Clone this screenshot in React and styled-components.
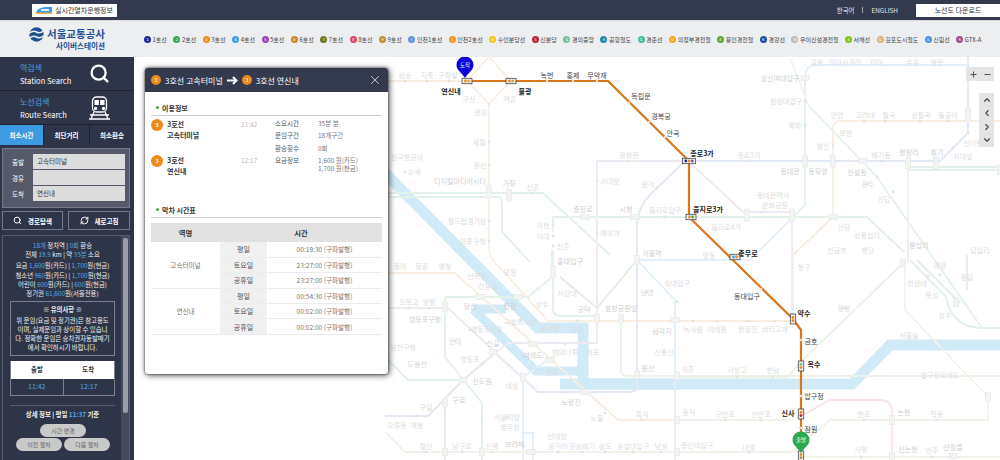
import React from 'react'
import styled, { createGlobalStyle } from 'styled-components'
import { ChevronUp, ChevronDown, ChevronLeft, ChevronRight, Plus, Minus, Search, RefreshCw, X } from 'lucide-react'

const FONT = '"Noto Sans CJK KR", "Noto Sans", sans-serif'

const LINES = [
  ['1호선', '#1c2f8f', '1'], ['2호선', '#3aa655', '2'], ['3호선', '#ef8a1d', '3'], ['4호선', '#3c9fdc', '4'],
  ['5호선', '#9a45b0', '5'], ['6호선', '#cf8a1f', '6'], ['7호선', '#6b7a26', '7'], ['8호선', '#e0436f', '8'],
  ['9호선', '#bd9030', '9'], ['인천1호선', '#5f93dd', 'I'], ['인천2호선', '#f09a25', 'I'], ['수인분당선', '#f0c419', 'B'],
  ['신분당', '#c0203a', 'S'], ['경의중앙', '#6fc09a', 'G'], ['공항철도', '#2585a8', 'A'], ['경춘선', '#3ebf9e', 'G'],
  ['의정부경전철', '#f2a71f', 'U'], ['용인경전철', '#55a83a', 'E'], ['경강선', '#1a4fa5', 'K'], ['우이신설경전철', '#b9b9b9', 'W'],
  ['서해선', '#7cc418', 'S'], ['김포도시철도', '#dcb670', 'G'], ['신림선', '#4b93e6', 'S'], ['GTX-A', '#a0508f', 'A'],
]

const PALE = [
  ['#f9eee0', 'M489 57 L511 81 L489 104 L467 81 L489 57 M489 104 V248 Q489 256 494 261 L548 321 H793 V255 L833 217 V128 Q833 121 840 121 H1000'],
  ['#f8eee0', 'M385 81 H467 M385 273 H455 L618 420 H680 M608 81 H620'],
  ['#e2f2e7', 'M553 250 V308 Q553 316 561 316 H595 M553 232 V217 H867 L904 252 M445 297 H528 L552 277 V250 M445 297 V357 L482 403 V460 M385 357 L408 380 H463'],
  ['#e2f2ea', 'M385 193 H543 L610 255 M385 197 H497 Q502 197 502 202 V232 L530 262 M808 105 L877 177 L982 328 H1000 M910 260 L946 297 Q952 328 982 328 M908 167 H1000 M908 170 H1000'],
  ['#e3e8f5', 'M688 161 H940 L968 133 V57 M685 161 L657 188 Q637 205 637 225 V385 Q637 392 630 392 H538 L495 353 L463 380 L428 416 H385 M445 400 V460'],
  ['#e2f0f9', 'M968 65 H817 Q805 65 805 78 V205 L750 260 H637 L675 300 V460 M523 460 V377 L555 355 M533 460 V433 H523'],
  ['#f0e9f4', 'M597 161 H688 M597 161 V343 H508 L495 353 M385 308 H448 L538 392 M688 161 L743 212 H792 V319'],
  ['#f3f2ea', 'M808 105 Q805 95 790 58 M905 262 V310 L988 397 V420 L963 420 H830 L793 452 H680 M763 420 H680 L793 420 M800 457 H1000 M385 432 L405 452 H800'],
  ['#ebf2e6', 'M903 263 L803 360 L787 377 H680 M908 170 V262 M621 316 V370 Q621 376 627 376 H1000'],
  ['#f9e5e8', 'M803 415 L830 400 H880 Q892 400 892 412 V460'],
  ['#e2eee3', 'M967 255 V290 M560 277 L597 308 L637 260 M917 260 L960 303'],
]

const PALE_LABELS = [
  ['삼송', 405, 75], ['지축', 427, 75], ['구파발', 448, 75], ['구산', 469, 99], ['역촌', 510, 99], ['응암', 481, 112],
  ['새절', 479, 142], ['증산', 480, 165], ['디지털미디어시티', 460, 181, 1], ['가좌', 509, 183, 1], ['신촌', 533, 187],
  ['월드컵경기장', 467, 221], ['마포구청', 473, 241], ['한국항공대', 407, 157], ['수색', 414, 172], ['아현', 543, 225],
  ['이대', 543, 236], ['신촌', 563, 246], ['충정로', 583, 209, 1], ['시청', 626, 209, 1], ['을지로입구', 665, 210],
  ['서대문', 610, 181], ['광화문', 629, 155], ['종각', 648, 184], ['애오개', 610, 233], ['서울역', 652, 253, 1],
  ['성신여대입구', 780, 78, 1], ['한성대입구', 786, 101], ['혜화', 795, 125], ['종로5가', 749, 155], ['동대문', 790, 171, 1],
  ['동묘앞', 818, 171, 1], ['창신', 823, 146], ['안암', 837, 115], ['보문', 846, 133], ['고려대', 865, 115], ['월곡', 889, 115],
  ['상월곡', 921, 115], ['돌곶이', 948, 115], ['제기동', 881, 155], ['청량리', 909, 152, 1], ['회기', 937, 152, 1],
  ['외대앞', 963, 156], ['신이문', 973, 143], ['신설동', 857, 172, 1], ['용두', 868, 184], ['신답', 884, 199],
  ['동대문역사', 773, 195], ['문화공원', 775, 205], ['을지로4가', 726, 227], ['신당', 844, 227], ['상왕십리', 867, 235],
  ['왕십리', 919, 245, 1], ['신금호', 837, 250], ['행당', 868, 250], ['답십리', 980, 250], ['길음', 817, 62], ['미아사거리', 845, 62],
  ['미아', 877, 62], ['수유', 913, 62], ['쌍문', 937, 62], ['명동', 709, 255], ['청구', 804, 267], ['응봉', 844, 308],
  ['한양대', 917, 283], ['뚝섬', 932, 295], ['마장', 940, 265], ['용답', 967, 277], ['성수', 945, 315], ['서울숲', 909, 335],
  ['압구정로데오', 940, 375], ['녹사평', 693, 329], ['이태원', 717, 329], ['한강진', 748, 329], ['버티고개', 775, 329],
  ['이촌', 688, 369], ['서빙고', 737, 370], ['한남', 773, 370], ['동작', 689, 412], ['구반포', 725, 414], ['신반포', 761, 414],
  ['반포', 864, 414], ['논현', 904, 412, 1], ['학동', 937, 414], ['사평', 861, 449], ['신논현', 908, 449, 1], ['언주', 932, 450],
  ['선정릉', 953, 447, 1], ['총신대입구', 697, 445], ['내방', 749, 447], ['합정', 510, 306, 1], ['당산', 470, 306, 1],
  ['망원', 510, 272], ['홍대입구', 570, 261, 1], ['서강대', 567, 293], ['상수', 542, 304], ['광흥창', 550, 328], ['대흥', 577, 329],
  ['공덕', 584, 309, 1], ['효창공원앞', 621, 308, 1], ['삼각지', 662, 331, 1], ['숙대입구', 677, 283], ['남영', 647, 292],
  ['신용산', 664, 352], ['용산', 648, 368, 1], ['여의도', 533, 355, 1], ['여의나루', 565, 352], ['마포', 593, 352],
  ['국회의사당', 520, 322], ['선유도', 488, 286], ['양평', 429, 302], ['오목교', 409, 302], ['영등포구청', 425, 319, 1],
  ['영등포시장', 487, 329], ['문래', 455, 341], ['신길', 493, 343, 1], ['영등포', 470, 359], ['신도림', 482, 381, 1],
  ['구로', 459, 400, 1], ['도림천', 417, 364], ['대방', 512, 386], ['샛강', 552, 372], ['노량진', 571, 402, 1], ['노들', 597, 418],
  ['흑석', 642, 414], ['구일', 426, 407], ['오류동', 397, 425], ['개봉', 417, 425], ['서울지방', 507, 417], ['병무청', 510, 427],
  ['신대방', 557, 436], ['삼거리', 558, 446], ['장승배기', 582, 446], ['상도', 605, 446], ['숭실대입구', 633, 446], ['남성', 661, 446],
  ['철산', 426, 446], ['남구로', 462, 446], ['신풍', 492, 446], ['보라매', 515, 444, 1], ['양천구청', 403, 347], ['증미', 400, 266],
  ['등촌', 422, 266], ['염창', 445, 266], ['신목동', 477, 276],
]

const PALE_DOTS = [
  [405, 81], [427, 81], [449, 81], [489, 104], [489, 142], [489, 165], [489, 221], [489, 241], [405, 172], [533, 193],
  [553, 225], [553, 236], [553, 246], [597, 181], [597, 233], [629, 161], [657, 188], [665, 217], [749, 161], [805, 125],
  [805, 101], [833, 146], [881, 161], [858, 161], [877, 177], [893, 192], [885, 121], [864, 121], [920, 121], [948, 121],
  [968, 133], [953, 148], [844, 308], [693, 321], [717, 321], [748, 321], [775, 321], [737, 377], [773, 377], [725, 420],
  [761, 420], [864, 420], [937, 420], [861, 457], [932, 457], [749, 452], [928, 276], [940, 275], [520, 320], [577, 321],
  [565, 344], [470, 330], [455, 341], [482, 364], [429, 308], [409, 308], [418, 364], [426, 416], [417, 416], [507, 417],
  [426, 452], [462, 452], [492, 452], [558, 452], [582, 452], [605, 452], [633, 452], [661, 452], [647, 292], [677, 302],
  [642, 420], [605, 413], [664, 352], [868, 184],
]

const PALE_MARKS = [
  [489, 192, 5, 13], [509, 195, 5, 12], [585, 217, 9, 5], [635, 217, 9, 5], [691, 217, 7, 5], [805, 78, 8, 5], [805, 161, 5, 12],
  [833, 161, 5, 12], [863, 161, 9, 5], [908, 163, 5, 12], [936, 163, 5, 12], [968, 115, 5, 14], [747, 215, 5, 12], [792, 215, 5, 12],
  [833, 217, 9, 5], [1000, 170, 5, 9], [903, 263, 5, 8], [956, 302, 5, 9], [988, 397, 5, 9], [892, 420, 5, 9], [892, 457, 5, 9],
  [953, 456, 8, 5], [553, 272, 5, 12], [597, 318, 5, 8], [621, 318, 5, 8], [637, 375, 5, 8], [677, 376, 5, 8], [445, 307, 5, 9],
  [463, 380, 8, 5], [493, 352, 8, 5], [523, 377, 5, 8], [445, 403, 5, 8], [445, 452, 5, 8], [482, 452, 5, 8], [531, 452, 9, 5],
  [677, 452, 5, 8], [677, 420, 5, 8], [585, 392, 9, 5], [480, 297, 9, 5], [518, 297, 9, 5], [533, 344, 9, 5], [550, 360, 9, 5],
  [637, 260, 5, 9], [675, 320, 9, 5],
]

const ACTIVE_LABELS = [
  ['연신내', 451, 91, 1], ['불광', 525, 91, 1], ['녹번', 547, 75], ['홍제', 573, 75], ['무악재', 597, 75], ['독립문', 641, 96],
  ['경복궁', 661, 116], ['안국', 673, 133], ['종로3가', 702, 153, 1], ['을지로3가', 708, 209, 1], ['충무로', 748, 253, 1],
  ['동대입구', 747, 296], ['약수', 804, 313, 1], ['금호', 811, 341], ['옥수', 814, 364, 1], ['압구정', 814, 396], ['신사', 788, 413, 1],
  ['잠원', 811, 429],
]

const ACTIVE_DOTS = [[547, 81], [573, 81], [597, 81], [629, 103], [649, 122], [665, 137], [761, 289], [801, 340], [801, 396], [801, 428]]

const TRANSFERS = [
  { x: 467, y: 81, colors: ['#ef8a1d', '#d9a44a'] },
  { x: 511, y: 81, colors: ['#ef8a1d', '#d9a44a'] },
  { x: 689, y: 161, colors: ['#1c2f8f', '#ef8a1d', '#9a45b0'], wide: true },
  { x: 691, y: 217, colors: ['#ef8a1d', '#3aa655'] },
  { x: 735, y: 257, colors: ['#3c9fdc', '#ef8a1d'] },
  { x: 793, y: 319, colors: ['#ef8a1d', '#cf8a1f'], vertical: true },
  { x: 801, y: 366, colors: ['#6fc09a', '#ef8a1d'], vertical: true },
  { x: 801, y: 414, colors: ['#ef8a1d', '#c0203a'], vertical: true },
  { x: 801, y: 456, colors: ['#ef8a1d', '#bd9030'], vertical: true },
]

const TIMETABLE = [
  ['고속터미널', [['평일', '00:19:30 (구파발행)'], ['토요일', '23:27:00 (구파발행)'], ['공휴일', '23:27:00 (구파발행)']]],
  ['연신내', [['평일', '00:54:30 (구파발행)'], ['토요일', '00:02:00 (구파발행)'], ['공휴일', '00:02:00 (구파발행)']]],
]

const Global = createGlobalStyle`
  html, body { margin: 0; padding: 0; background: #fff; overflow: hidden; }
  body { font-family: ${FONT}; }
  * { box-sizing: border-box; }
`

const Page = styled.div`
  width: 1000px;
  height: 460px;
  display: flex;
  flex-direction: column;
  overflow: hidden;
`

const TopBar = styled.header`
  height: 20px;
  flex: none;
  background: #343a4e;
  display: flex;
  align-items: center;
  padding: 0 0 0 32px;
`

const WhiteButton = styled.div`
  height: 13px;
  background: #fff;
  color: #333;
  font-size: 7px;
  display: flex;
  align-items: center;
  justify-content: center;
  gap: 3px;
  width: ${p => p.$width}px;
`

const TopLinks = styled.nav`
  margin-left: auto;
  display: flex;
  align-items: center;
  color: #e6e7ea;
  font-size: 6.4px;
  margin-right: 18px;
  gap: 8px;
`

const Sep = styled.span`
  width: 1px;
  height: 6px;
  background: #9fa3ae;
`

const LegendBar = styled.div`
  height: 37px;
  flex: none;
  background: #eceef0;
  border-top: 1px solid #d8dade;
  position: relative;
`

const LegendRow = styled.div`
  display: flex;
  align-items: center;
  height: 100%;
`

const LogoBox = styled.div`
  width: 144px;
  flex: none;
  display: flex;
  padding-left: 29px;
  gap: 3px;
  margin-top: -2px;
`

const LogoText = styled.div`
  display: flex;
  flex-direction: column;
  align-items: flex-end;
  color: #1d4f91;
  font-weight: 700;
  font-size: 10.5px;
  line-height: 13px;
  small {
    font-size: 7.6px;
    line-height: 9px;
    margin-top: 1px;
  }
`

const Legend = styled.ul`
  list-style: none;
  display: flex;
  gap: 6.5px;
  margin: 0;
  padding: 0;
`

const LegendItem = styled.li`
  display: flex;
  align-items: center;
  gap: 1.5px;
  font-size: 6px;
  color: #444;
  white-space: nowrap;
`

const LineBadge = styled.span`
  width: 7px;
  height: 7px;
  border-radius: 50%;
  background: ${p => p.$color};
  color: #fff;
  font-size: 4px;
  line-height: 7px;
  text-align: center;
`

const Body = styled.div`
  flex: 1;
  display: flex;
  min-height: 0;
`

const Sidebar = styled.aside`
  width: 134px;
  flex: none;
  background: #2f3548;
  display: flex;
  flex-direction: column;
`

const SearchLink = styled.div`
  height: ${p => p.$h}px;
  flex: none;
  padding: 0 24px 0 20px;
  display: flex;
  align-items: center;
  justify-content: space-between;
  border-bottom: 1px solid #1e2231;
`

const SearchText = styled.div`
  color: #fff;
  font-size: 7.6px;
  line-height: 13px;
  b {
    display: block;
    color: #4a9fde;
    font-weight: 400;
    font-size: 8px;
  }
`

const Tabs = styled.div`
  display: grid;
  grid-template-columns: 43px 46px 45px;
  height: 20px;
  flex: none;
`

const Tab = styled.div`
  display: flex;
  align-items: center;
  justify-content: center;
  font-size: 6.5px;
  font-weight: 700;
  color: #fff;
  background: ${p => (p.$active ? '#3d9be3' : '#2f3548')};
  border-left: ${p => (p.$active ? '0' : '1px solid #1e2231')};
`

const RouteBox = styled.div`
  margin: 3px 4px 0 2px;
  height: 60px;
  background: #55596a;
  border: 1px solid #757989;
  padding: 5px 4px 0 0;
  display: flex;
  flex-direction: column;
  gap: 1px;
`

const RouteRow = styled.div`
  display: flex;
  align-items: center;
  height: 15px;
  color: #fff;
  font-size: 6.5px;
  label {
    width: 30px;
    text-align: center;
  }
`

const RouteInput = styled.div`
  flex: 1;
  height: 15px;
  background: #dcdcdc;
  color: #333;
  padding-left: 4px;
  line-height: 14px;
`

const ActionRow = styled.div`
  margin: 3px 4px 0 2px;
  display: grid;
  grid-template-columns: 61px 62px;
  justify-content: space-between;
`

const ActionButton = styled.div`
  height: 19px;
  border: 1px solid #757989;
  color: #fff;
  font-size: 6.5px;
  font-weight: 700;
  display: flex;
  align-items: center;
  justify-content: center;
  gap: 6px;
`

const ResultPanel = styled.section`
  margin: 5px 4px 0 2px;
  flex: 1;
  border: 1px solid #555a6c;
  border-bottom: 0;
  display: grid;
  grid-template-columns: 1fr 8px;
  min-height: 0;
  overflow: hidden;
`

const ResultInner = styled.div`
  padding: 5px 6px 0 7px;
  color: #f0f0f0;
  font-size: 6.4px;
  line-height: 9.2px;
  text-align: center;
`

const Hi = styled.span`
  color: #54a8e6;
`

const Gap = styled.div`
  height: ${p => p.$h}px;
`

const Notice = styled.div`
  margin: 3px 0 0;
  border: 1px solid #7c8090;
  padding: 3px 2px 2px;
  line-height: 9.3px;
  white-space: nowrap;
  b {
    display: block;
    margin-bottom: 1px;
  }
`

const TimeBox = styled.div`
  margin-top: 5px;
  display: grid;
  grid-template-columns: 1fr 1fr;
  border: 1px solid #7c8090;
  border-top: 0;
`

const TimeHead = styled.div`
  background: #fff;
  color: #333;
  font-weight: 700;
  height: 18px;
  line-height: 18px;
  margin-right: ${p => (p.$first ? '-0.5px' : '0')};
`

const TimeCell = styled.div`
  color: #54a8e6;
  height: 16px;
  line-height: 15px;
  font-size: 7px;
  border-left: ${p => (p.$first ? '0' : '1px solid #7c8090')};
`

const Divider = styled.hr`
  margin: 9px 0 4px;
  border: 0;
  border-top: 1px solid #555a6c;
`

const Pills = styled.div`
  margin: 5px -8px 0 -7px;
  display: flex;
  flex-wrap: wrap;
  justify-content: center;
  column-gap: 2px;
  row-gap: 0.5px;
`

const Pill = styled.div`
  width: 46px;
  height: 13.5px;
  border-radius: 7px;
  background: #c9c9c9;
  color: #666;
  font-size: 6px;
  line-height: 13px;
  margin: 0 ${p => (p.$wide ? '30px' : '0')};
`

const Track = styled.div`
  background: #454a5c;
  padding: 2px 1.5px;
  div {
    height: 175px;
    border-radius: 2px;
    background: #9b9da7;
  }
`

const MapArea = styled.main`
  position: relative;
  flex: 1;
  background: #fff;
  overflow: hidden;
`

const MapSvg = styled.svg`
  display: block;
  text {
    font-family: ${FONT};
    text-anchor: middle;
    dominant-baseline: central;
  }
`

const ZoomGroup = styled.div`
  position: absolute;
  top: 10px;
  right: 6px;
  width: 28px;
  height: 14px;
  display: flex;
  background: #e4e4e4;
  color: #444;
  align-items: center;
  justify-content: space-around;
`

const ArrowGroup = styled.div`
  position: absolute;
  top: 36px;
  right: 6px;
  width: 15px;
  height: 54px;
  background: #e4e4e4;
  color: #444;
  display: flex;
  flex-direction: column;
  align-items: center;
  justify-content: space-around;
`

const Popup = styled.section`
  position: absolute;
  left: 11px;
  top: 11px;
  width: 243px;
  height: 306px;
  background: #fff;
  border-radius: 3px;
  box-shadow: 0 0 2px #222, 1px 1px 6px rgba(0, 0, 0, 0.75);
  overflow: hidden;
`

const PopupHead = styled.div`
  height: 24px;
  background: #343a4e;
  color: #fff;
  font-size: 8px;
  display: flex;
  align-items: center;
  padding: 0 6px 0 6px;
  gap: 4px;
`

const OrangeDot = styled.span`
  width: ${p => p.$size}px;
  height: ${p => p.$size}px;
  flex: none;
  border-radius: 50%;
  background: #ef8a1d;
  color: #fff;
  font-size: 5px;
  line-height: ${p => p.$size}px;
  text-align: center;
`

const CloseBox = styled.span`
  margin-left: auto;
  display: flex;
  margin-right: 0;
`

const PopupBody = styled.div`
  padding: 9px 6px 0;
`

const SectionTitle = styled.h3`
  margin: 0;
  height: 13px;
  border-bottom: 1px solid #cfcfcf;
  box-sizing: content-box;
  padding: 0 0 1px 5px;
  font-size: 7px;
  line-height: 12px;
  font-weight: 700;
  color: #333;
  display: flex;
  align-items: center;
  gap: 3px;
  &::before {
    content: '';
    width: 3px;
    height: 3px;
    border-radius: 50%;
    background: #46a84f;
  }
`

const InfoGrid = styled.div`
  height: 87px;
  padding-top: 3px;
  display: grid;
  grid-template-columns: 124px 1fr;
`

const StopList = styled.div`
  display: flex;
  flex-direction: column;
  gap: 13px;
`

const Stop = styled.div`
  display: grid;
  grid-template-columns: 16px 74px 1fr;
  font-size: 7px;
  line-height: 11px;
  color: #333;
  font-weight: 700;
  height: 23px;
  span.time {
    font-weight: 400;
    color: #b9b9b9;
    font-size: 6.5px;
  }
`

const InfoList = styled.dl`
  margin: 0;
  display: grid;
  grid-template-columns: 43px 1fr;
  grid-auto-rows: 12.3px;
  font-size: 6.5px;
  line-height: 9px;
  color: #777;
  dt {
    color: #555;
  }
  dd {
    margin: 0;
    line-height: 8px;
    white-space: nowrap;
  }
`

const TimeTable = styled.table`
  margin-top: 5px;
  width: 231px;
  border-collapse: collapse;
  table-layout: fixed;
  font-size: 6.6px;
  color: #777;
  text-align: center;
  th {
    height: 19px;
    background: #e1e1e1;
    color: #333;
    font-size: 7.4px;
    font-weight: 700;
    padding: 0;
  }
  td {
    height: 15.4px;
    padding: 0;
    border-bottom: 1px solid #ececec;
  }
`

const DayCell = styled.td`
  background: #f0f0f0;
  color: #555;
  font-size: 7px;
`

function Train() {
  return (
    <svg width="21" height="24" viewBox="0 0 21 24" fill="none" stroke="#fff" strokeWidth="1.3">
      <rect x="3.5" y="1" width="14" height="15" rx="4" />
      <rect x="5.5" y="4" width="10" height="5" fill="#fff" stroke="none" />
      <path d="M10.5 4v5" stroke="#2f3548" />
      <circle cx="6.5" cy="12.5" r="1" fill="#fff" />
      <circle cx="14.5" cy="12.5" r="1" fill="#fff" />
      <path d="M5 16l-3 7M16 16l3 7M1 19h19M0 23h21" />
    </svg>
  )
}

function Logo() {
  return (
    <svg width="15" height="15" viewBox="0 0 15 15">
      <circle cx="7.5" cy="7.5" r="7.2" fill="#1d4f91" />
      <path d="M0 6.5 Q4 3 7.5 5 T15 3.5 M0 11.5 Q4 8 7.5 10 T15 8.5" stroke="#eceef0" strokeWidth="1.6" fill="none" />
    </svg>
  )
}

function TrainMini() {
  return (
    <svg width="16" height="9" viewBox="0 0 16 9">
      <path d="M0 7 Q1 2 9 1 L16 1 L16 8 L0 8Z" fill="#3d9be3" />
      <rect x="5" y="3" width="8" height="2" fill="#dff1fb" />
      <rect x="0" y="6.5" width="16" height="1.5" fill="#f2b04a" />
    </svg>
  )
}

function Pin({ x, y, color, label }) {
  return (
    <g>
      <path d={`M${x} ${y + 13} C${x - 3} ${y + 8} ${x - 8.5} ${y + 5} ${x - 8.5} ${y} A8.5 8.5 0 1 1 ${x + 8.5} ${y} C${x + 8.5} ${y + 5} ${x + 3} ${y + 8} ${x} ${y + 13}Z`} fill={color} />
      <text x={x} y={y} fontSize="5.5" fill="#fff">{label}</text>
    </g>
  )
}

function TransferMark({ x, y, colors, wide, vertical }) {
  const long = wide ? 13 : 10
  const w = vertical ? 5.5 : long
  const h = vertical ? long : 5.5
  return (
    <g>
      <rect x={x - w / 2} y={y - h / 2} width={w} height={h} fill="#eee" stroke="#333" strokeWidth="0.7" />
      {colors.map((c, i) => {
        const off = (i - (colors.length - 1) / 2) * 3.2
        return <circle key={i} cx={vertical ? x : x + off} cy={vertical ? y + off : y} r="1.4" fill={c} />
      })}
    </g>
  )
}

function SubwayMap() {
  return (
    <MapSvg width="866" height="403" viewBox="134 57 866 403">
      <g fill="none" stroke="#d0eaf8" strokeWidth="11" strokeLinejoin="miter">
        <path d="M380 168 L538 328 H583 V384 H852 L890 345 H1000" />
        <path d="M680 384 H560" />
        <path d="M473 309 H506" strokeWidth="9" />
        <path d="M473 309 L536 371 H585" strokeWidth="9" />
      </g>
      <g fill="none" strokeWidth="1.8" strokeLinejoin="round">
        {PALE.map(([color, d], i) => <path key={i} d={d} stroke={color} />)}
      </g>
      {PALE_DOTS.map(([x, y], i) => <circle key={i} cx={x} cy={y} r="1.4" fill="#e0e5e2" />)}
      {PALE_MARKS.map(([x, y, w, h], i) => (
        <rect key={i} x={x - w / 2} y={y - h / 2} width={w} height={h} fill="#f2f4f2" stroke="#e0e3e0" strokeWidth="0.5" />
      ))}
      {PALE_LABELS.map(([t, x, y, strong], i) => (
        <text key={i} x={x} y={y} fontSize="7" fill={strong ? '#cfcfcf' : '#dcdcdc'}>{t}</text>
      ))}
      <path d="M467 81 H608 L689 161 V217 L793 319 L801 330 V456" fill="none" stroke="#d9761a" strokeWidth="2.2" strokeLinejoin="round" />
      {ACTIVE_DOTS.map(([x, y], i) => <circle key={i} cx={x} cy={y} r="1.2" fill="#fff" stroke="#e2a264" strokeWidth="0.4" />)}
      {TRANSFERS.map((t, i) => <TransferMark key={i} {...t} />)}
      {ACTIVE_LABELS.map(([t, x, y, strong], i) => (
        <text key={i} x={x} y={y} fontSize="7" fontWeight={strong ? 700 : 400} fill={strong ? '#222' : '#444'}>{t}</text>
      ))}
      <Pin x={465} y={65} color="#0b00dc" label="도착" />
      <Pin x={801} y={440} color="#2da84f" label="출발" />
    </MapSvg>
  )
}

export default function App() {
  return (
    <Page>
      <Global />
      <TopBar>
        <WhiteButton $width={85}><TrainMini />실시간열차운행정보</WhiteButton>
        <TopLinks>
          <span>한국어</span>
          <Sep />
          <span>ENGLISH</span>
        </TopLinks>
        <WhiteButton $width={84}>노선도 다운로드</WhiteButton>
      </TopBar>
      <LegendBar>
        <LegendRow>
          <LogoBox>
            <Logo />
            <LogoText>서울교통공사<small>사이버스테이션</small></LogoText>
          </LogoBox>
          <Legend>
            {LINES.map(([name, color, mark]) => (
              <LegendItem key={name}><LineBadge $color={color}>{mark}</LineBadge>{name}</LegendItem>
            ))}
          </Legend>
        </LegendRow>
      </LegendBar>
      <Body>
        <Sidebar>
          <SearchLink $h={34}>
            <SearchText><b>역검색</b>Station Search</SearchText>
            <Search size={21} color="#fff" strokeWidth={2.6} />
          </SearchLink>
          <SearchLink $h={34}>
            <SearchText><b>노선검색</b>Route Search</SearchText>
            <Train />
          </SearchLink>
          <Tabs>
            <Tab $active>최소시간</Tab>
            <Tab>최단거리</Tab>
            <Tab>최소환승</Tab>
          </Tabs>
          <RouteBox>
            <RouteRow><label>출발</label><RouteInput>고속터미널</RouteInput></RouteRow>
            <RouteRow><label>경유</label><RouteInput /></RouteRow>
            <RouteRow><label>도착</label><RouteInput>연신내</RouteInput></RouteRow>
          </RouteBox>
          <ActionRow>
            <ActionButton><Search size={9} strokeWidth={2.6} />경로탐색</ActionButton>
            <ActionButton><RefreshCw size={9} strokeWidth={2.6} />새로고침</ActionButton>
          </ActionRow>
          <ResultPanel>
            <ResultInner>
              <div><Hi>18개</Hi> 정차역 | <Hi>0회</Hi> 환승</div>
              <div>전체 <Hi>19.9</Hi> km | 약 <Hi>35분</Hi> 소요</div>
              <Gap $h={2} />
              <div>요금 <Hi>1,600</Hi>원(카드) | <Hi>1,700</Hi>원(현금)</div>
              <div>청소년 <Hi>960</Hi>원(카드) | <Hi>1,700</Hi>원(현금)</div>
              <div>어린이 <Hi>600</Hi>원(카드) | <Hi>600</Hi>원(현금)</div>
              <div>정기권 <Hi>61,600</Hi>원(서울전용)</div>
              <Notice>
                <b>※ 유의사항 ※</b>
                위 운임(요금 및 정기권)은 참고용도<br />
                이며, 실제운임과 상이할 수 있습니<br />
                다. 정확한 운임은 승차권자동발매기<br />
                에서 확인하시기 바랍니다.
              </Notice>
              <TimeBox>
                <TimeHead $first>출발</TimeHead>
                <TimeHead>도착</TimeHead>
                <TimeCell $first>11:42</TimeCell>
                <TimeCell>12:17</TimeCell>
              </TimeBox>
              <Divider />
              <div><b>상세 정보 | 평일 <Hi>11:37</Hi> 기준</b></div>
              <Pills>
                <Pill $wide>시간 변경</Pill>
                <Pill>이전 열차</Pill>
                <Pill>다음 열차</Pill>
              </Pills>
            </ResultInner>
            <Track><div /></Track>
          </ResultPanel>
        </Sidebar>
        <MapArea>
          <SubwayMap />
          <ZoomGroup><Plus size={9} strokeWidth={2.4} /><Minus size={9} strokeWidth={2.4} /></ZoomGroup>
          <ArrowGroup>
            <ChevronUp size={10} strokeWidth={2.6} />
            <ChevronLeft size={10} strokeWidth={2.6} />
            <ChevronRight size={10} strokeWidth={2.6} />
            <ChevronDown size={10} strokeWidth={2.6} />
          </ArrowGroup>
          <Popup>
            <PopupHead>
              <OrangeDot $size={10}>3</OrangeDot>
              <span>3호선 고속터미널</span>
              <svg width="11" height="9" viewBox="0 0 11 9" fill="none" stroke="#fff" strokeWidth="2"><path d="M0 4.5h9M6 1l3.5 3.5L6 8" /></svg>
              <OrangeDot $size={10}>3</OrangeDot>
              <span>3호선 연신내</span>
              <CloseBox><X size={14} strokeWidth={1.2} /></CloseBox>
            </PopupHead>
            <PopupBody>
              <SectionTitle>이용정보</SectionTitle>
              <InfoGrid>
                <StopList>
                  <Stop>
                    <OrangeDot $size={12}>3</OrangeDot>
                    <span>3호선<br />고속터미널</span>
                    <span className="time">11:42</span>
                  </Stop>
                  <Stop>
                    <OrangeDot $size={12}>3</OrangeDot>
                    <span>3호선<br />연신내</span>
                    <span className="time">12:17</span>
                  </Stop>
                </StopList>
                <InfoList>
                  <dt>소요시간</dt><dd>35분 분</dd>
                  <dt>운임구간</dt><dd>18개구간</dd>
                  <dt>환승횟수</dt><dd>0회</dd>
                  <dt>요금정보</dt><dd>1,600 원(카드)<br />1,700 원(현금)</dd>
                </InfoList>
              </InfoGrid>
              <SectionTitle>막차 시간표</SectionTitle>
              <TimeTable>
                <colgroup><col width="69" /><col width="47" /><col width="115" /></colgroup>
                <thead>
                  <tr><th>역명</th><th colSpan="2">시간</th></tr>
                </thead>
                <tbody>
                  {TIMETABLE.map(([station, rows]) => rows.map(([day, time], i) => (
                    <tr key={station + day}>
                      {i === 0 && <td rowSpan="3">{station}</td>}
                      <DayCell>{day}</DayCell>
                      <td>{time}</td>
                    </tr>
                  )))}
                </tbody>
              </TimeTable>
            </PopupBody>
          </Popup>
        </MapArea>
      </Body>
    </Page>
  )
}
